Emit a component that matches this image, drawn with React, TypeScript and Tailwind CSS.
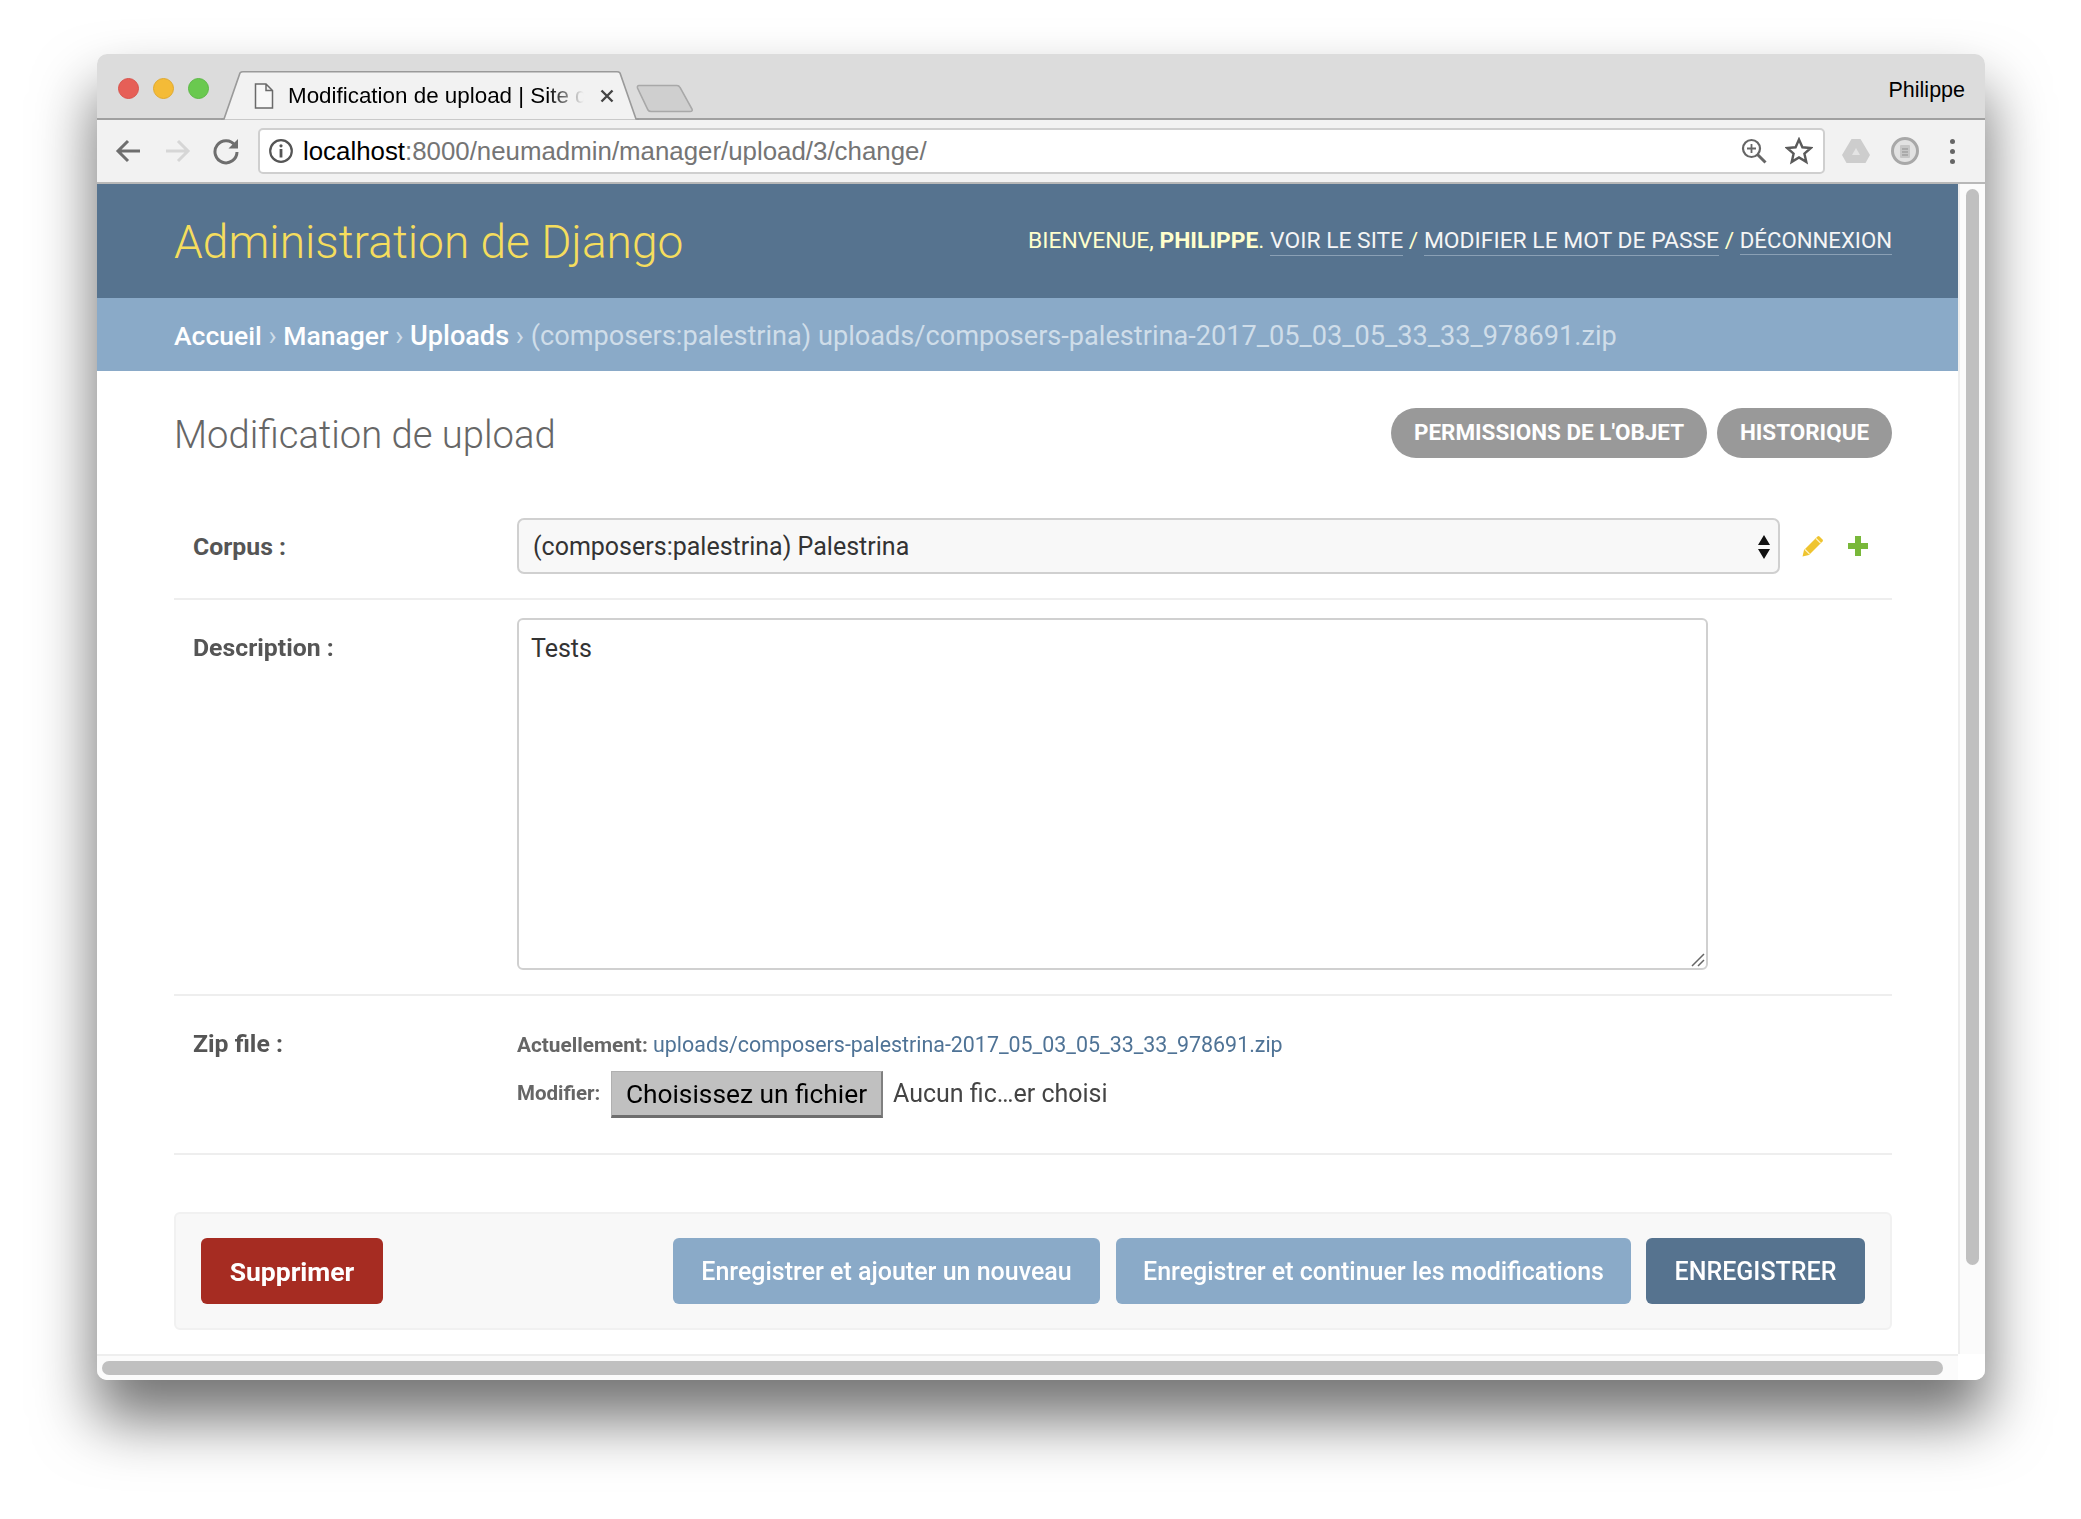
import React from "react";

const font = { fontFamily: "Roboto, sans-serif" };

function Tab() {
  return (
    <div className="relative w-[418px] h-[49px] flex items-center pl-[33px]">
      <svg className="absolute left-0 top-0" width="418" height="49" viewBox="0 0 418 49">
        <path d="M0 48.5 L3 48 L19 2 Q20 0.8 22 0.8 L396 0.8 Q398 0.8 399 2 L415 48 L418 48.5" fill="#f2f2f2" stroke="#9a9a9a" strokeWidth="1.6" />
      </svg>
      <svg className="relative shrink-0" width="20" height="26" viewBox="0 0 20 26">
        <path d="M1.5 1 H12 L18.5 7.5 V25 H1.5 Z M12 1 V7.5 H18.5" fill="#f8f8f8" stroke="#6a6a6a" strokeWidth="1.5" />
      </svg>
      <div className="relative w-[302px] ml-[14px] overflow-hidden whitespace-nowrap text-[22.4px] text-black" style={{ fontFamily: "Liberation Sans, sans-serif", maskImage: "linear-gradient(to right, black 86%, transparent 98%)" }}>
        Modification de upload | Site de
      </div>
      <svg className="relative ml-[9px] shrink-0" width="16" height="16" viewBox="0 0 16 16">
        <path d="M2.5 2.5 L13.5 13.5 M13.5 2.5 L2.5 13.5" stroke="#444" strokeWidth="2.4" />
      </svg>
    </div>
  );
}

function Toolbar() {
  return (
    <div className="h-[64px] bg-[#f2f2f2] border-b-2 border-[#b8b8b8] flex items-center">
      <svg className="ml-[18px] shrink-0" width="26" height="26" viewBox="0 0 26 26" fill="none" stroke="#6e6e6e" strokeWidth="3">
        <path d="M25 13 H3 M13 3 L3 13 L13 23" />
      </svg>
      <svg className="ml-[24px] shrink-0" width="26" height="26" viewBox="0 0 26 26" fill="none" stroke="#d6d6d6" strokeWidth="3">
        <path d="M1 13 H23 M13 3 L23 13 L13 23" />
      </svg>
      <svg className="ml-[21px] shrink-0" width="28" height="28" viewBox="0 0 28 28" fill="none">
        <path d="M23 8.5 A11 11 0 1 0 25 15" stroke="#6e6e6e" strokeWidth="3" />
        <path d="M26 2 V11.5 H16.5 Z" fill="#6e6e6e" />
      </svg>
      <div className="ml-[18px] w-[1567px] h-[46px] bg-white border-2 border-[#cfcfcf] rounded-[5px] flex items-center">
        <svg className="ml-[8px] shrink-0" width="26" height="26" viewBox="0 0 26 26" fill="none">
          <circle cx="13" cy="13" r="10.8" stroke="#555" strokeWidth="2.2" />
          <circle cx="13" cy="7.8" r="1.6" fill="#555" />
          <path d="M13 11 V19.5" stroke="#555" strokeWidth="2.8" />
        </svg>
        <div className="ml-[9px] text-[25.85px] whitespace-nowrap text-[#757575]" style={{ fontFamily: "Liberation Sans, sans-serif" }}>
          <span className="text-black">localhost</span>:8000/neumadmin/manager/upload/3/change/
        </div>
        <svg className="ml-auto shrink-0" width="26" height="26" viewBox="0 0 26 26" fill="none" stroke="#666">
          <circle cx="10.5" cy="10.5" r="8.5" strokeWidth="2.2" />
          <path d="M16.5 16.5 L24.5 24.5" strokeWidth="3" />
          <path d="M10.5 6 V15 M6 10.5 H15" strokeWidth="1.8" />
        </svg>
        <svg className="ml-[18px] mr-[10px] shrink-0" width="28" height="28" viewBox="0 0 28 28" fill="none" stroke="#5a5a5a" strokeWidth="2.4">
          <path d="M14 2.5 L17.4 10.3 L25.8 11 L19.4 16.6 L21.3 24.9 L14 20.5 L6.7 24.9 L8.6 16.6 L2.2 11 L10.6 10.3 Z" />
        </svg>
      </div>
      <svg className="ml-[17px] shrink-0" width="28" height="26" viewBox="0 0 28 26">
        <path d="M9.5 1 H18.5 L28 17 L23.5 25 H4.5 L0 17 Z" fill="#cdcdcd" />
        <path d="M14 10 L18 17 H10 Z" fill="#e4e4e4" />
      </svg>
      <svg className="ml-[21px] shrink-0" width="28" height="28" viewBox="0 0 28 28" fill="none">
        <circle cx="14" cy="14" r="12.5" fill="#e2e2e2" stroke="#a8a8a8" strokeWidth="3" />
        <rect x="9" y="8" width="10" height="13" rx="1" fill="#c6c6c6" />
        <path d="M11 12 H17 M11 15 H17 M11 18 H17" stroke="#8f8f8f" strokeWidth="1" />
      </svg>
      <div className="ml-[31px] flex flex-col gap-[5px] shrink-0">
        <div className="w-[5px] h-[5px] rounded-full bg-[#666]" />
        <div className="w-[5px] h-[5px] rounded-full bg-[#666]" />
        <div className="w-[5px] h-[5px] rounded-full bg-[#666]" />
      </div>
    </div>
  );
}

function TitleBar() {
  return (
    <div className="h-[66px] bg-[#dcdcdc] rounded-t-[10px] flex items-end relative">
      <div className="absolute left-0 right-0 bottom-0 h-[2px] bg-[#a0a0a0]" />
      <div className="flex gap-[14px] ml-[21px] mb-[21px] self-end">
        <div className="w-[21px] h-[21px] rounded-full bg-[#e65f57] border border-[#d9534c]" />
        <div className="w-[21px] h-[21px] rounded-full bg-[#f4bb37] border border-[#e0a92f]" />
        <div className="w-[21px] h-[21px] rounded-full bg-[#6ac94f] border border-[#5cb945]" />
      </div>
      <div className="ml-[12px] relative"><Tab /></div>
      <svg className="relative -ml-[3px] mb-[7px] shrink-0" width="58" height="29" viewBox="0 0 58 29">
        <path d="M3 1.5 H41 Q43 1.5 44 3.5 L56 25 Q57 27.5 54 27.5 H15 Q13 27.5 12 26 L1.5 4 Q1 1.5 3 1.5 Z" fill="#cfcfcf" stroke="#a8a8a8" strokeWidth="1.6" />
      </svg>
      <div className="ml-auto mr-[20px] mb-[17px] text-[21.5px] text-black leading-[26px]" style={{ fontFamily: "Liberation Sans, sans-serif" }}>Philippe</div>
    </div>
  );
}

function Header() {
  const link = "border-b border-[#8aa0b5] text-[#f5f5f5] pb-[1px]";
  return (
    <div className="h-[114px] bg-[#56738f] flex items-center pl-[77px] pr-[66px]" style={font}>
      <div className="text-[46.1px] font-light text-[#f5dd5d] leading-[54px] pt-[2px]">Administration de Django</div>
      <div className="ml-auto text-[22.85px] text-[#ffffcc] whitespace-nowrap uppercase">
        Bienvenue, <strong className="font-bold">Philippe</strong>.{" "}
        <span className={link}>Voir le site</span> / <span className={link}>Modifier le mot de passe</span> / <span className={`${link} text-[22.2px]`}>Déconnexion</span>
      </div>
    </div>
  );
}

function Crumbs() {
  const link = "text-white font-medium text-[26.5px]";
  return (
    <div className="h-[73px] bg-[#8aaac8] flex items-center pl-[77px] pt-[3px] text-[27.15px] text-[#cfdde9] whitespace-pre" style={font}>
      <span className={link}>Accueil</span>{" › "}<span className={link}>Manager</span>{" › "}<span className="text-white font-medium text-[27.1px]">Uploads</span>{" › "}(composers:palestrina) uploads/composers-palestrina-2017_05_03_05_33_33_978691.zip
    </div>
  );
}

function Content() {
  return (
    <div className="flex-1 bg-white pl-[77px] pr-[66px] pt-[37px]" style={font}>
      <div className="h-[50px] flex items-center">
        <h1 className="text-[38.2px] font-light text-[#666] pt-[5px]">Modification de upload</h1>
        <div className="ml-auto flex gap-[10px] text-[22.45px] font-bold text-white uppercase">
          <div className="h-[50px] w-[316px] rounded-[25px] bg-[#999] flex items-center justify-center">Permissions de l'objet</div>
          <div className="h-[50px] w-[175px] rounded-[25px] bg-[#999] flex items-center justify-center">Historique</div>
        </div>
      </div>

      <div className="mt-[60px] flex items-start pb-[24px] border-b-2 border-[#eeeeee]">
        <div className="w-[343px] pl-[19px] pt-[2px] h-[56px] flex items-center text-[24.8px] font-bold text-[#555]">Corpus :</div>
        <div className="w-[1263px] h-[56px] bg-[#f8f8f8] border-2 border-[#d0d0d0] rounded-[7px] flex items-center pl-[14px] pr-[8px] pt-[2px] text-[25px] text-[#333]">
          (composers:palestrina) Palestrina
          <svg className="ml-auto" width="12" height="24" viewBox="0 0 12 24">
            <path d="M6 0 L12 10 H0 Z M0 14 H12 L6 24 Z" fill="#111" />
          </svg>
        </div>
        <div className="h-[56px] flex items-center">
          <svg className="ml-[22px]" width="22" height="22" viewBox="0 0 22 22">
            <path d="M0.5 21.5 L2 15 L15.5 1.5 Q16.5 0.5 17.5 1.5 L20.5 4.5 Q21.5 5.5 20.5 6.5 L7 20 Z" fill="#efc42f" />
            <path d="M3 14.5 L7.5 19 M14 3.5 L18.5 8" stroke="#fff3c0" strokeWidth="1.2" />
          </svg>
          <svg className="ml-[24px]" width="20" height="20" viewBox="0 0 20 20">
            <path d="M7 0 H13 V7 H20 V13 H13 V20 H7 V13 H0 V7 H7 Z" fill="#79b83a" />
          </svg>
        </div>
      </div>

      <div className="pt-[18px] pb-[24px] flex items-start border-b-2 border-[#eeeeee]">
        <div className="w-[343px] pl-[19px] pt-[15px] text-[24.8px] leading-[30px] font-bold text-[#555]">Description :</div>
        <div className="w-[1191px] h-[352px] bg-white border-2 border-[#d0d0d0] rounded-[6px] pl-[12px] pt-[14px] text-[25px] leading-[30px] text-[#333] relative">
          Tests
          <svg className="absolute right-[1px] bottom-[1px]" width="14" height="14" viewBox="0 0 14 14">
            <path d="M1 13 L13 1 M7 13 L13 7" stroke="#666" strokeWidth="1.5" />
          </svg>
        </div>
      </div>

      <div className="h-[159px] flex items-start border-b-2 border-[#eeeeee]">
        <div className="w-[343px] pl-[19px] pt-[33px] text-[24.8px] leading-[30px] font-bold text-[#555]">Zip file :</div>
        <div className="pt-[36px] flex flex-col">
          <div className="text-[21.4px] leading-[26px] text-[#4f7396] whitespace-nowrap">
            <strong className="font-bold text-[#666] text-[20.8px]">Actuellement:</strong> uploads/composers-palestrina-2017_05_03_05_33_33_978691.zip
          </div>
          <div className="mt-[13px] flex items-start">
            <strong className="font-bold text-[#666] text-[20.5px] leading-[26px] w-[94px] pt-[9px]">Modifier:</strong>
            <div className="w-[272px] h-[47px] pt-[2px] bg-[#c0c0c0] border border-[#b0b0b0] border-b-[3px] border-b-[#6e6e6e] border-r-2 border-r-[#808080] flex items-center justify-center text-[26.3px] text-black">Choisissez un fichier</div>
            <div className="ml-[10px] h-[46px] flex items-center text-[25px] text-[#444]">Aucun fic…er choisi</div>
          </div>
        </div>
      </div>

      <div className="mt-[57px] h-[118px] bg-[#f8f8f8] border-2 border-[#f1f1f1] rounded-[6px] flex items-center pl-[25px] pr-[25px] text-[25px] font-medium text-white">
        <div className="w-[182px] h-[66px] pt-[1px] bg-[#a62c22] rounded-[6px] flex items-center justify-center font-bold text-[26.5px]">Supprimer</div>
        <div className="ml-auto w-[427px] h-[66px] pt-[1px] bg-[#8aaac8] rounded-[6px] flex items-center justify-center">Enregistrer et ajouter un nouveau</div>
        <div className="ml-[16px] w-[515px] h-[66px] pt-[1px] bg-[#8aaac8] rounded-[6px] flex items-center justify-center">Enregistrer et continuer les modifications</div>
        <div className="ml-[15px] w-[219px] h-[66px] pt-[1px] bg-[#56738f] rounded-[6px] flex items-center justify-center uppercase">Enregistrer</div>
      </div>
    </div>
  );
}

export default function App() {
  return (
    <div className="w-[2081px] h-[1519px] bg-white pl-[97px] pt-[54px] overflow-hidden">
      <div className="w-[1888px] h-[1326px] flex flex-col rounded-[10px] bg-white blur-[0.6px] shadow-[0_38px_60px_2px_rgba(0,0,0,0.55)]">
        <TitleBar />
        <Toolbar />
        <div className="flex-1 flex min-h-0">
          <div className="flex-1 flex flex-col min-w-0">
            <Header />
            <Crumbs />
            <Content />
          </div>
          <div className="w-[27px] bg-[#fbfbfb] border-l-2 border-[#eeeeee] pl-[6px] pt-[5px]">
            <div className="w-[13px] h-[1076px] rounded-full bg-[#c0c0c0]" />
          </div>
        </div>
        <div className="h-[26px] flex rounded-b-[10px] overflow-hidden">
          <div className="flex-1 bg-[#fbfbfb] border-t-2 border-[#eeeeee] pl-[5px] pt-[5px]">
            <div className="w-[1841px] h-[14px] rounded-full bg-[#c0c0c0]" />
          </div>
          <div className="w-[27px] bg-white" />
        </div>
      </div>
    </div>
  );
}
